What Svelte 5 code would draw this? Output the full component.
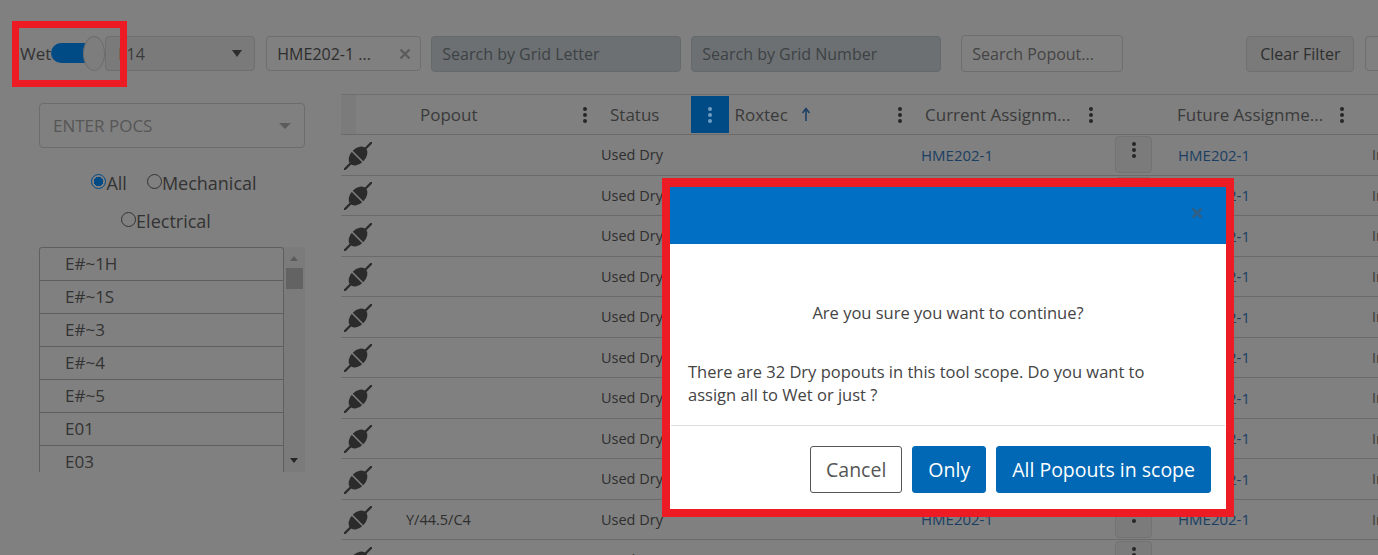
<script lang="ts">
	const pocs = ['E#~1H', 'E#~1S', 'E#~3', 'E#~4', 'E#~5', 'E01', 'E03'];
	const rows = [
		{ popout: '', status: 'Used Dry' },
		{ popout: '', status: 'Used Dry' },
		{ popout: '', status: 'Used Dry' },
		{ popout: '', status: 'Used Dry' },
		{ popout: '', status: 'Used Dry' },
		{ popout: '', status: 'Used Dry' },
		{ popout: '', status: 'Used Dry' },
		{ popout: '', status: 'Used Dry' },
		{ popout: '', status: 'Used Dry' },
		{ popout: 'Y/44.5/C4', status: 'Used Dry' },
		{ popout: 'Y/44/10', status: 'Used Dry' }
	];
</script>

{#snippet kebab()}
	<svg class="kebab" width="6" height="18" viewBox="0 0 6 18" aria-hidden="true">
		<circle cx="3" cy="3" r="2" />
		<circle cx="3" cy="9" r="2" />
		<circle cx="3" cy="15" r="2" />
	</svg>
{/snippet}

{#snippet plug()}
	<svg class="plug" width="28" height="28" viewBox="0 0 28 28" aria-hidden="true">
		<path d="M1 27 L7 21 M21 7 L27 1" stroke="#2b2b2b" stroke-width="2.4" stroke-linecap="round" />
		<ellipse cx="14" cy="14" rx="11" ry="7.5" transform="rotate(-45 14 14)" fill="#2b2b2b" />
		<path d="M7.5 8.5 L19.5 20.5" stroke="#808080" stroke-width="1.5" />
	</svg>
{/snippet}

<div class="page">
	<header class="toolbar">
		<span class="wet">Wet</span>
		<div class="toggle"><span class="track"></span><span class="thumb"></span></div>
		<div class="field select">F14<span class="caret"></span></div>
		<div class="field chip">
			<span>HME202-1 ...</span>
			<svg width="12" height="12" viewBox="0 0 12 12" aria-hidden="true">
				<path d="M1.5 1.5 L10.5 10.5 M10.5 1.5 L1.5 10.5" stroke="#5c5c5c" stroke-width="2.4" />
			</svg>
		</div>
		<div class="field grid-search">Search by Grid Letter</div>
		<div class="field grid-search">Search by Grid Number</div>
		<div class="field popout-search">Search Popout...</div>
		<button class="clear">Clear Filter</button>
		<div class="field stub"></div>
	</header>

	<div class="content">
		<aside class="side">
			<div class="poc">ENTER POCS<span class="caret light"></span></div>
			<div class="radios">
				<label><span class="radio on"></span>All</label>
				<label class="mech"><span class="radio"></span>Mechanical</label>
				<label><span class="radio"></span>Electrical</label>
			</div>
			<div class="list">
				<ul>
					{#each pocs as poc}
						<li>{poc}</li>
					{/each}
				</ul>
				<div class="scroll">
					<span class="tri up"></span>
					<span class="bar"></span>
					<span class="tri down"></span>
				</div>
			</div>
		</aside>

		<section class="table">
			<div class="row head">
				<div class="c0"></div>
				<div class="c1 h"><span>Popout</span>{@render kebab()}</div>
				<div class="c2 h">
					<span>Status</span>
					<span class="active">{@render kebab()}</span>
					<span class="rox">Roxtec</span>
					<svg class="arrow" width="10" height="15" viewBox="0 0 10 15" aria-hidden="true">
						<path d="M5 14 V2 M1.5 6 L5 1.5 L8.5 6" fill="none" stroke="#1f3f66" stroke-width="1.6" />
					</svg>
					<span class="end">{@render kebab()}</span>
				</div>
				<div class="c3 h"><span>Current Assignm...</span>{@render kebab()}</div>
				<div class="c4 h"><span>Future Assignme...</span>{@render kebab()}</div>
			</div>
			{#each rows as row}
				<div class="row">
					<div class="c0">{@render plug()}</div>
					<div class="c1">{row.popout}</div>
					<div class="c2">{row.status}</div>
					<div class="c3">
						<span class="link">HME202-1</span>
						<span class="more">{@render kebab()}</span>
					</div>
					<div class="c4 link">HME202-1</div>
					<div class="c5">In</div>
				</div>
			{/each}
		</section>
	</div>

	<!-- red annotation round the toggle -->
	<div class="mark"></div>

	<div class="modal" role="dialog" aria-modal="true">
		<div class="modal-head">
			<svg width="12" height="12" viewBox="0 0 12 12" aria-hidden="true">
				<path d="M1.5 1.5 L10.5 10.5 M10.5 1.5 L1.5 10.5" stroke="#2f5f85" stroke-width="2.6" />
			</svg>
		</div>
		<div class="modal-body">
			<p class="ask">Are you sure you want to continue?</p>
			<p>There are 32 Dry popouts in this tool scope. Do you want to assign all to Wet or just ?</p>
		</div>
		<div class="modal-foot">
			<button class="btn ghost">Cancel</button>
			<button class="btn">Only</button>
			<button class="btn">All Popouts in scope</button>
		</div>
	</div>
</div>

<style>
	:global(body) {
		margin: 0;
	}

	.page {
		position: relative;
		width: 1378px;
		height: 555px;
		overflow: hidden;
		background: #808080;
		color: #2e2e2e;
		font-family: 'Open Sans', 'Noto Sans', sans-serif;
		font-size: 15px;
	}

	.toolbar {
		display: flex;
		align-items: center;
		height: 35px;
		padding: 36px 0 0 20px;
		white-space: nowrap;
		font-size: 16px;
	}

	.wet {
		width: 44px;
		font-size: 17px;
		color: #333;
	}

	.toggle {
		position: relative;
		width: 54px;
		height: 35px;
		z-index: 1;
		flex: none;
	}

	.track {
		position: absolute;
		left: 0;
		top: 7px;
		width: 40px;
		height: 20px;
		border-radius: 10px 0 0 10px;
		background: #004a86;
	}

	.thumb {
		position: absolute;
		left: 32px;
		top: 0;
		width: 20px;
		height: 33px;
		border-radius: 50%;
		background: #7d7d7d;
		border: 1px solid #6c6c6c;
	}

	.field {
		display: flex;
		align-items: center;
		box-sizing: border-box;
		height: 35px;
		border-radius: 4px;
		border: 1px solid #6e6e6e;
		flex: none;
	}

	.select {
		width: 150px;
		margin-left: 0;
		padding: 0 12px 0 12px;
		justify-content: space-between;
		background: #7a7a7a;
		color: #3a3a3a;
	}

	.caret {
		width: 0;
		height: 0;
		border-left: 5px solid transparent;
		border-right: 5px solid transparent;
		border-top: 7px solid #2e2e2e;
	}

	.caret.light {
		border-top-color: #5c5c5c;
		border-left-width: 6px;
		border-right-width: 6px;
		border-top-width: 6px;
	}

	.chip {
		width: 155px;
		margin-left: 11px;
		padding: 0 9px 0 10px;
		justify-content: space-between;
	}

	.grid-search {
		width: 250px;
		margin-left: 10px;
		padding-left: 10px;
		height: 36px;
		background: #6c7072;
		color: #3d4245;
		border-color: #656a6c;
	}

	.popout-search {
		width: 162px;
		margin-left: 20px;
		padding-left: 10px;
		height: 37px;
		color: #444;
	}

	.clear {
		box-sizing: border-box;
		width: 108px;
		height: 36px;
		margin-left: 123px;
		padding: 0;
		flex: none;
		background: #7a7a7a;
		border: 1px solid #707070;
		border-radius: 4px;
		color: #2e2e2e;
		font: inherit;
	}

	.stub {
		width: 40px;
		margin-left: 11px;
	}

	.content {
		display: flex;
		padding: 23px 0 0 39px;
	}

	.side {
		width: 266px;
		flex: none;
	}

	.poc {
		box-sizing: border-box;
		display: flex;
		align-items: center;
		justify-content: space-between;
		height: 45px;
		margin-top: 9px;
		padding: 0 13px;
		border: 1px solid #6c6c6c;
		border-radius: 4px;
		font-size: 17px;
		color: #565656;
	}

	.radios {
		display: flex;
		flex-wrap: wrap;
		justify-content: center;
		row-gap: 12px;
		margin-top: 22px;
		padding-left: 4px;
		font-size: 18px;
		line-height: 26px;
		color: #333;
	}

	.radios label {
		display: flex;
		align-items: center;
	}

	.radios .mech {
		margin-left: 20px;
	}

	.radios label:last-child {
		flex-basis: 100%;
		justify-content: center;
		padding-right: 16px;
	}

	.radio {
		box-sizing: border-box;
		width: 15px;
		height: 15px;
		margin-top: -4px;
		border-radius: 50%;
		border: 1.5px solid #333;
	}

	.radio.on {
		border-color: #004a86;
		background: radial-gradient(circle, #004a86 0 4.5px, transparent 5px);
	}

	.list {
		display: flex;
		height: 225px;
		margin-top: 13px;
		overflow: hidden;
		background: #808080;
	}

	.list ul {
		flex: 1;
		margin: 0;
		padding: 0;
		list-style: none;
		border: 1px solid #5f5f5f;
		border-bottom: 0;
		border-radius: 3px 3px 0 0;
		font-size: 17px;
	}

	.list li {
		box-sizing: border-box;
		height: 33px;
		padding-left: 25px;
		line-height: 31px;
		border-bottom: 1px solid #5f5f5f;
		color: #333;
	}

	.scroll {
		position: relative;
		width: 21px;
		background: #7b7b7b;
	}

	.bar {
		position: absolute;
		left: 2px;
		top: 21px;
		width: 17px;
		height: 21px;
		background: #636363;
	}

	.tri {
		position: absolute;
		left: 6px;
		border-left: 4.5px solid transparent;
		border-right: 4.5px solid transparent;
	}

	.tri.up {
		top: 9px;
		border-bottom: 5px solid #5b5b5b;
	}

	.tri.down {
		bottom: 9px;
		border-top: 5px solid #262626;
	}

	.table {
		margin-left: 36px;
		width: 1037px;
		flex: none;
	}

	.row {
		display: grid;
		grid-template-columns: 65px 195px 320px 257px 194px 6px;
		align-items: center;
		box-sizing: border-box;
		height: 40.5px;
		border-bottom: 1px solid #6a6a6a;
		font-size: 14.5px;
		white-space: nowrap;
	}

	.head {
		height: 41px;
		margin-left: 0;
		border-top: 1px solid #6f6f6f;
		font-size: 17px;
		color: #3a3a3a;
	}

	.head .c0 {
		height: 100%;
		width: 15px;
		background: #7b7b7b;
	}

	.plug {
		display: block;
		margin: 2px 0 0 3px;
	}

	.h {
		display: flex;
		align-items: center;
		height: 100%;
	}

	.kebab {
		fill: #262626;
		flex: none;
	}

	.c1.h {
		padding-left: 14px;
		padding-right: 13px;
		justify-content: space-between;
	}

	.c2.h {
		padding-left: 9px;
		padding-right: 18px;
	}

	.active {
		display: flex;
		align-items: center;
		justify-content: center;
		width: 38px;
		height: 37px;
		margin-left: 32px;
		background: #004a86;
	}

	.active .kebab {
		fill: #6f9fc4;
	}

	.rox {
		margin-left: 5px;
	}

	.arrow {
		margin-left: 13px;
	}

	.end {
		display: flex;
		margin-left: auto;
	}

	.c3.h {
		padding-left: 4px;
		gap: 17px;
	}

	.c4.h {
		gap: 16px;
		margin-left: -1px;
	}

	.c3:not(.h) {
		display: flex;
		align-items: center;
		justify-content: space-between;
		padding-right: 26px;
		font-size: 15px;
	}

	.link {
		color: #1b3f63;
		font-size: 15px;
	}

	.more {
		box-sizing: border-box;
		display: flex;
		justify-content: center;
		width: 37px;
		height: 37px;
		padding-top: 4px;
		background: #7b7b7b;
		border: 1px solid #737373;
		border-radius: 4px;
	}

	.c5 {
		font-size: 14px;
		color: #3a3a3a;
		overflow: visible;
	}

	.mark {
		position: absolute;
		left: 12px;
		top: 21px;
		width: 115px;
		height: 66px;
		box-sizing: border-box;
		border: 7px solid #ed1c24;
	}

	.modal {
		position: absolute;
		left: 662px;
		top: 178px;
		box-sizing: border-box;
		width: 572px;
		height: 339px;
		display: flex;
		flex-direction: column;
		background: #fff;
		border: solid #ed1c24;
		border-width: 9px 8px 8px;
		color: #444;
		font-size: 16.5px;
	}

	.modal-head {
		display: flex;
		align-items: center;
		justify-content: flex-end;
		height: 57px;
		flex: none;
		padding: 0 23px 6px 0;
		box-sizing: border-box;
		background: #006fc4;
	}

	.modal-body {
		flex: 1;
		padding: 0 60px 0 18px;
		line-height: 23px;
	}

	.modal-body p {
		margin: 0;
	}

	.ask {
		padding: 57px 0 36px;
		margin-right: -42px !important;
		text-align: center;
	}

	.modal-foot {
		display: flex;
		justify-content: flex-end;
		gap: 10px;
		height: 84px;
		box-sizing: border-box;
		margin: 0 1px;
		padding: 20px 14px 0 0;
		border-top: 1px solid #ddd;
	}

	.btn {
		height: 47px;
		padding: 0 15px;
		border: 1px solid #0068b5;
		border-radius: 3px;
		background: #0068b5;
		color: #fff;
		font: 500 19.5px 'Open Sans', 'Noto Sans', sans-serif;
	}

	.btn.ghost {
		background: #fff;
		border-color: #555;
		color: #555;
	}
</style>
